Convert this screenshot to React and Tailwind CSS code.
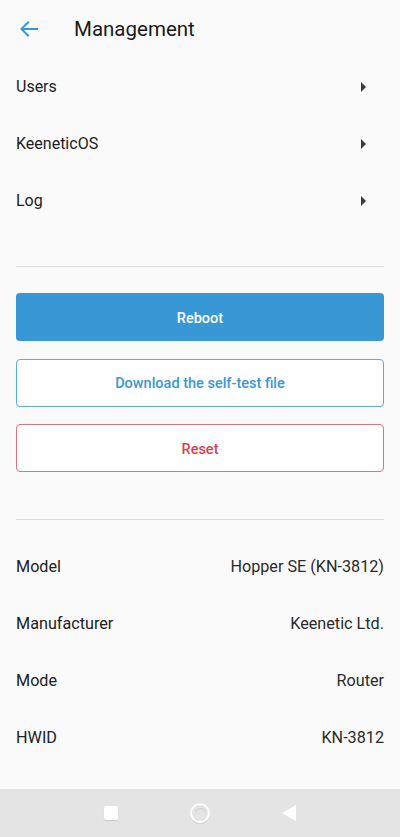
import React from 'react';

const menu = ['Users', 'KeeneticOS', 'Log'];

const info = [
    { label: 'Model', value: 'Hopper SE (KN-3812)' },
    { label: 'Manufacturer', value: 'Keenetic Ltd.' },
    { label: 'Mode', value: 'Router' },
    { label: 'HWID', value: 'KN-3812' },
];

const App = () => {
    return (
        <div className="flex min-h-screen flex-col bg-[#fafafa] text-[#212121]" style={{ fontFamily: 'Roboto, "Noto Sans", sans-serif' }}>
            {/* Header */}
            <div className="flex h-[58px] items-center px-4">
                <svg width="24" height="24" viewBox="0 0 24 24" className="ml-[1px]">
                    <path d="M20 12H5.5M11 5.5L4.5 12l6.5 6.5" fill="none" stroke="#3a97d6" strokeWidth="2" strokeLinecap="square" />
                </svg>
                <h1 className="ml-[33px] text-[20.5px] font-normal text-[#1a1a1a]">Management</h1>
            </div>

            {/* Menu */}
            <div>
                {menu.map(item => (
                    <div key={item} className="flex h-[57px] items-center justify-between px-4">
                        <span className="text-[16px]">{item}</span>
                        <svg width="6" height="10" viewBox="0 0 6 10" className="mr-[17px]">
                            <path d="M0 0L5 5L0 10Z" fill="#3a3a3f" />
                        </svg>
                    </div>
                ))}
            </div>

            <div className="mx-4 mt-[37px] h-px bg-[#dcdcdc]" />

            {/* Actions */}
            <div className="mt-[26px] flex flex-col gap-[17.5px] px-4">
                <button className="h-12 rounded-[4px] bg-[#3898d6] pt-[3px] text-[14.5px] font-medium text-white">Reboot</button>
                <button className="h-12 rounded-[4px] border border-[#5aace2] bg-white pt-[3px] text-[14.5px] font-medium text-[#3a97d6]">
                    Download the self-test file
                </button>
                <button className="h-12 rounded-[4px] border border-[#dc7580] bg-white pt-[3px] text-[14.5px] font-medium text-[#d9434f]">
                    Reset
                </button>
            </div>

            <div className="mx-4 mt-[47px] h-px bg-[#dcdcdc]" />

            {/* Info */}
            <div className="pt-[19px]">
                {info.map(({ label, value }) => (
                    <div key={label} className="flex h-[57px] items-center justify-between px-4 text-[16.2px]">
                        <span>{label}</span>
                        <span className="text-[#2a2a2a]">{value}</span>
                    </div>
                ))}
            </div>

            {/* Android nav bar */}
            <div className="mt-auto flex h-12 items-center justify-center gap-[72px] bg-[#e4e4e4]">
                <div className="h-[14px] w-[14px] rounded-[2px] bg-white shadow-[0_1px_1px_rgba(0,0,0,0.12)]" />
                <div className="flex h-[20px] w-[20px] items-center justify-center rounded-full border-[2.5px] border-white shadow-[0_1px_1px_rgba(0,0,0,0.12)]">
                    <div className="h-[11px] w-[11px] rounded-full bg-[#e4e4e4] shadow-[inset_0_1px_1px_rgba(0,0,0,0.1)]" />
                </div>
                <svg width="14" height="16" viewBox="0 0 14 16">
                    <path d="M14 0V16L0 8Z" fill="#ffffff" />
                </svg>
            </div>
        </div>
    );
};

export default App;
